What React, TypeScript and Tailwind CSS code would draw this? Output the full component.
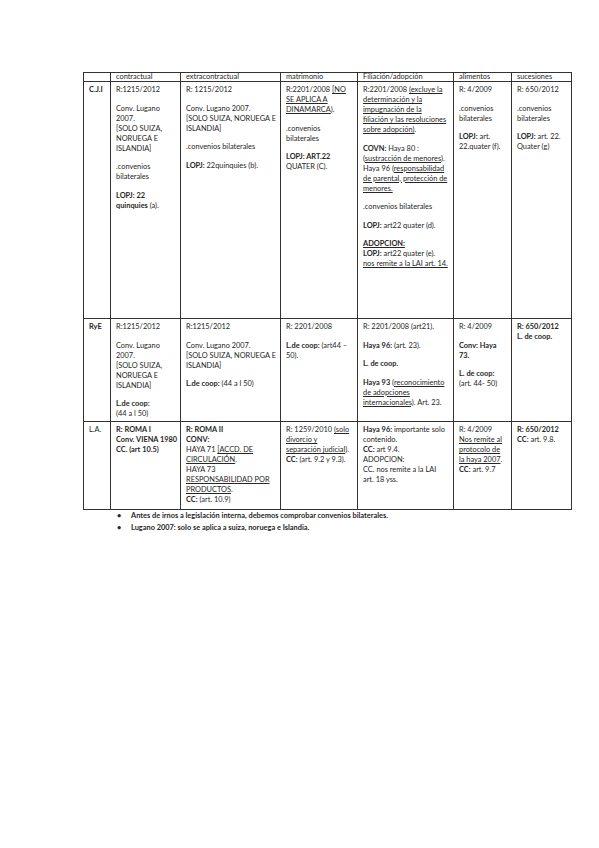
import React from 'react';

type Seg = string | { u: string } | { b: string } | { bu: string };

// one printed line of a cell; segments can be underlined or bold
function L({ parts, bold = false }: { parts: Seg[]; bold?: boolean }) {
  return (
    <div className={`whitespace-nowrap h-[10px] ${bold ? 'font-bold' : ''}`}>
      {parts.map((p, i) => {
        if (typeof p === 'string') return <span key={i}>{p}</span>;
        if ('u' in p) return <span key={i} className="underline underline-offset-1">{p.u}</span>;
        if ('b' in p) return <span key={i} className="font-bold">{p.b}</span>;
        return <span key={i} className="font-bold underline underline-offset-1">{p.bu}</span>;
      })}
    </div>
  );
}

const Gap = () => <div className="h-[8.5px]" />;

const headers = ['', 'contractual', 'extracontractual', 'matrimonio', 'Filiación/adopción', 'alimentos', 'sucesiones'];
const widths = ['w-[27px]', 'w-[70px]', 'w-[100px]', 'w-[77px]', 'w-[96px]', 'w-[58px]', 'w-[60px]'];

const cell = 'border border-[#333] align-top pl-[5px] pr-[2px] pt-[3px]';

export default function App() {
  return (
    <div
      className="w-[599px] h-[848px] bg-white text-[#262626] text-[7.4px] leading-[10px] pl-[83px] pt-[72px]"
      style={{ fontFamily: 'Lato, "Open Sans", sans-serif' }}
    >
      <table className="border-collapse table-fixed w-[488px]">
        <colgroup>
          {widths.map((w, i) => (
            <col key={i} className={w} />
          ))}
        </colgroup>
        <thead>
          <tr className="h-[8px]">
            {headers.map((h, i) => (
              <th key={i} className="border border-[#333] text-left font-normal pl-[5px] leading-[8px] align-top">
                {h}
              </th>
            ))}
          </tr>
        </thead>
        <tbody>
          {/* C.J.I */}
          <tr className="h-[237px]">
            <td className={`${cell} font-bold`}>C.J.I</td>
            <td className={cell}>
              <L parts={['R:1215/2012']} />
              <Gap />
              <L parts={['Conv. Lugano']} />
              <L parts={['2007.']} />
              <L parts={['[SOLO SUIZA,']} />
              <L parts={['NORUEGA E']} />
              <L parts={['ISLANDIA]']} />
              <Gap />
              <L parts={['.convenios']} />
              <L parts={['bilaterales']} />
              <Gap />
              <L bold parts={['LOPJ: 22']} />
              <L parts={[{ b: 'quinquies' }, ' (a).']} />
            </td>
            <td className={cell}>
              <L parts={['R: 1215/2012']} />
              <Gap />
              <L parts={['Conv. Lugano 2007.']} />
              <L parts={['[SOLO SUIZA, NORUEGA E']} />
              <L parts={['ISLANDIA]']} />
              <Gap />
              <L parts={['.convenios bilaterales']} />
              <Gap />
              <L parts={[{ b: 'LOPJ:' }, ' 22quinquies (b).']} />
            </td>
            <td className={cell}>
              <L parts={['R:2201/2008 ', { u: '[NO' }]} />
              <L parts={[{ u: 'SE APLICA A' }]} />
              <L parts={[{ u: 'DINAMARCA' }, ').']} />
              <Gap />
              <L parts={['.convenios']} />
              <L parts={['bilaterales']} />
              <Gap />
              <L bold parts={['LOPJ: ART.22']} />
              <L parts={['QUATER (C).']} />
            </td>
            <td className={cell}>
              <L parts={['R:2201/2008 ', { u: '(excluye la' }]} />
              <L parts={[{ u: 'determinación y la' }]} />
              <L parts={[{ u: 'impugnación de la' }]} />
              <L parts={[{ u: 'filiación y las resoluciones' }]} />
              <L parts={[{ u: 'sobre adopción)' }, '.']} />
              <Gap />
              <L parts={[{ b: 'COVN:' }, ' Haya 80 :']} />
              <L parts={['(', { u: 'sustracción de menores' }, ').']} />
              <L parts={['Haya 96 (', { u: 'responsabilidad' }]} />
              <L parts={[{ u: 'de parental, protección de' }]} />
              <L parts={[{ u: 'menores.' }]} />
              <Gap />
              <L parts={['.convenios bilaterales']} />
              <Gap />
              <L parts={[{ b: 'LOPJ:' }, ' art22 quater (d).']} />
              <Gap />
              <L parts={[{ bu: 'ADOPCION:' }]} />
              <L parts={[{ b: 'LOPJ:' }, ' art22 quater (e).']} />
              <L parts={[{ u: 'nos remite a la LAI art. 14.' }]} />
            </td>
            <td className={cell}>
              <L parts={['R: 4/2009']} />
              <Gap />
              <L parts={['.convenios']} />
              <L parts={['bilaterales']} />
              <Gap />
              <L parts={[{ b: 'LOPJ:' }, ' art.']} />
              <L parts={['22.quater (f).']} />
            </td>
            <td className={cell}>
              <L parts={['R: 650/2012']} />
              <Gap />
              <L parts={['.convenios']} />
              <L parts={['bilaterales']} />
              <Gap />
              <L parts={[{ b: 'LOPJ:' }, ' art. 22.']} />
              <L parts={['Quater (g)']} />
            </td>
          </tr>

          {/* RyE */}
          <tr className="h-[103px]">
            <td className={`${cell} font-bold`}>RyE</td>
            <td className={cell}>
              <L parts={['R:1215/2012']} />
              <Gap />
              <L parts={['Conv. Lugano']} />
              <L parts={['2007.']} />
              <L parts={['[SOLO SUIZA,']} />
              <L parts={['NORUEGA E']} />
              <L parts={['ISLANDIA]']} />
              <Gap />
              <L bold parts={['L.de coop:']} />
              <L parts={['(44 a l 50)']} />
            </td>
            <td className={cell}>
              <L parts={['R:1215/2012']} />
              <Gap />
              <L parts={['Conv. Lugano 2007.']} />
              <L parts={['[SOLO SUIZA, NORUEGA E']} />
              <L parts={['ISLANDIA]']} />
              <Gap />
              <L parts={[{ b: 'L.de coop:' }, ' (44 a l 50)']} />
            </td>
            <td className={cell}>
              <L parts={['R: 2201/2008']} />
              <Gap />
              <L parts={[{ b: 'L.de coop:' }, ' (art44 –']} />
              <L parts={['50).']} />
            </td>
            <td className={cell}>
              <L parts={['R: 2201/2008 (art21).']} />
              <Gap />
              <L parts={[{ b: 'Haya 96:' }, ' (art. 23).']} />
              <Gap />
              <L bold parts={['L. de coop.']} />
              <Gap />
              <L parts={[{ b: 'Haya 93' }, ' (', { u: 'reconocimiento' }]} />
              <L parts={[{ u: 'de adopciones' }]} />
              <L parts={[{ u: 'internacionales)' }, '. Art. 23.']} />
            </td>
            <td className={cell}>
              <L parts={['R: 4/2009']} />
              <Gap />
              <L bold parts={['Conv: Haya']} />
              <L bold parts={['73.']} />
              <Gap />
              <L bold parts={['L. de coop:']} />
              <L parts={['(art. 44- 50)']} />
            </td>
            <td className={cell}>
              <L bold parts={['R: 650/2012']} />
              <L bold parts={['L. de coop.']} />
            </td>
          </tr>

          {/* L.A. */}
          <tr className="h-[88px]">
            <td className={cell}>L.A.</td>
            <td className={cell}>
              <L bold parts={['R: ROMA I']} />
              <L bold parts={['Conv. VIENA 1980']} />
              <L bold parts={['CC. (art 10.5)']} />
            </td>
            <td className={cell}>
              <L bold parts={['R: ROMA II']} />
              <L bold parts={['CONV:']} />
              <L parts={['HAYA 71 ', { u: '[ACCD. DE' }]} />
              <L parts={[{ u: 'CIRCULACIÓN' }, '.']} />
              <L parts={['HAYA 73']} />
              <L parts={[{ u: 'RESPONSABILIDAD POR' }]} />
              <L parts={[{ u: 'PRODUCTOS' }, '.']} />
              <L parts={[{ b: 'CC:' }, ' (art. 10.9)']} />
            </td>
            <td className={cell}>
              <L parts={['R: 1259/2010 ', { u: '(solo' }]} />
              <L parts={[{ u: 'divorcio y' }]} />
              <L parts={[{ u: 'separación judicial' }, ').']} />
              <L parts={[{ b: 'CC:' }, ' (art. 9.2 y 9.3).']} />
            </td>
            <td className={cell}>
              <L parts={[{ b: 'Haya 96:' }, ' importante solo']} />
              <L parts={['contenido.']} />
              <L parts={[{ b: 'CC:' }, ' art 9.4.']} />
              <L parts={['ADOPCION:']} />
              <L parts={['CC. nos remite a la LAI']} />
              <L parts={['art. 18 yss.']} />
            </td>
            <td className={cell}>
              <L parts={['R: 4/2009']} />
              <L parts={[{ u: 'Nos remite al' }]} />
              <L parts={[{ u: 'protocolo de' }]} />
              <L parts={[{ u: 'la haya 2007' }, '.']} />
              <L parts={[{ b: 'CC:' }, ' art. 9.7']} />
            </td>
            <td className={cell}>
              <L bold parts={['R: 650/2012']} />
              <L parts={[{ b: 'CC:' }, ' art. 9.8.']} />
            </td>
          </tr>
        </tbody>
      </table>

      <ul className="mt-[0px] font-bold">
        <li className="flex h-[12px] items-center">
          <span className="w-[48px] pl-[34px]">•</span>
          <span>Antes de irnos a legislación interna, debemos comprobar convenios bilaterales.</span>
        </li>
        <li className="flex h-[12px] items-center">
          <span className="w-[48px] pl-[34px]">•</span>
          <span>Lugano 2007: solo se aplica a suiza, noruega e Islandia.</span>
        </li>
      </ul>
    </div>
  );
}
